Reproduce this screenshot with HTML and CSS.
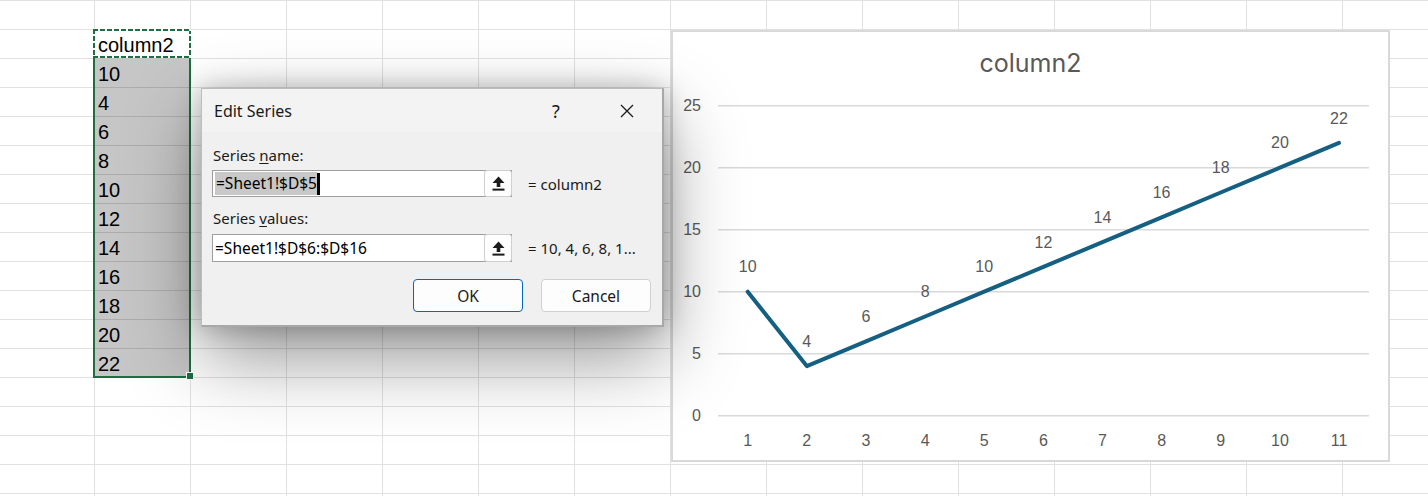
FILE: index.html
```html
<!DOCTYPE html>
<html>
<head>
<meta charset="utf-8">
<title>Edit Series</title>
<link rel="stylesheet" href="styles.css">
</head>
<body>
<div class="sheet">
  <div class="sel">
    <div class="sel-head">column2</div>
    <div class="sel-body">
      <div class="sel-row">10</div>
      <div class="sel-row">4</div>
      <div class="sel-row">6</div>
      <div class="sel-row">8</div>
      <div class="sel-row">10</div>
      <div class="sel-row">12</div>
      <div class="sel-row">14</div>
      <div class="sel-row">16</div>
      <div class="sel-row">18</div>
      <div class="sel-row">20</div>
      <div class="sel-row">22</div>
    </div>
    <span class="fill-handle"></span>
  </div>
</div>

<div class="chart">
  <div class="chart-title">column2</div>
  <svg class="chart-plot" width="715" height="378" viewBox="673 82 715 378">
    <g class="grid">
      <line x1="718" x2="1369" y1="105.7" y2="105.7"/>
      <line x1="718" x2="1369" y1="167.7" y2="167.7"/>
      <line x1="718" x2="1369" y1="229.7" y2="229.7"/>
      <line x1="718" x2="1369" y1="291.7" y2="291.7"/>
      <line x1="718" x2="1369" y1="353.7" y2="353.7"/>
      <line x1="718" x2="1369" y1="415.7" y2="415.7"/>
    </g>
    <g class="ylab">
      <text x="701" y="111.4">25</text>
      <text x="701" y="173.4">20</text>
      <text x="701" y="235.4">15</text>
      <text x="701" y="297.4">10</text>
      <text x="701" y="359.4">5</text>
      <text x="701" y="421.4">0</text>
    </g>
    <g class="xlab">
      <text x="747.7" y="445.7">1</text>
      <text x="806.8" y="445.7">2</text>
      <text x="866.0" y="445.7">3</text>
      <text x="925.1" y="445.7">4</text>
      <text x="984.2" y="445.7">5</text>
      <text x="1043.4" y="445.7">6</text>
      <text x="1102.5" y="445.7">7</text>
      <text x="1161.6" y="445.7">8</text>
      <text x="1220.7" y="445.7">9</text>
      <text x="1279.9" y="445.7">10</text>
      <text x="1339.0" y="445.7">11</text>
    </g>
    <polyline class="series" points="747.7,291.7 806.8,366.1 866.0,341.3 925.1,316.5 984.2,291.7 1043.4,266.9 1102.5,242.1 1161.6,217.3 1220.7,192.5 1279.9,167.7 1339.0,142.9"/>
    <g class="dlab">
      <text x="747.7" y="272.4">10</text>
      <text x="806.8" y="346.8">4</text>
      <text x="866.0" y="322.0">6</text>
      <text x="925.1" y="297.2">8</text>
      <text x="984.2" y="272.4">10</text>
      <text x="1043.4" y="247.6">12</text>
      <text x="1102.5" y="222.8">14</text>
      <text x="1161.6" y="198.0">16</text>
      <text x="1220.7" y="173.2">18</text>
      <text x="1279.9" y="148.4">20</text>
      <text x="1339.0" y="123.6">22</text>
    </g>
  </svg>
</div>

<div class="dialog">
  <div class="dlg-title">
    <span class="dlg-caption">Edit Series</span>
    <span class="dlg-help">?</span>
    <span class="dlg-close">
      <svg width="14" height="14" viewBox="0 0 14 14"><path d="M1 1 L13 13 M13 1 L1 13" stroke="#1a1a1a" stroke-width="1.3" fill="none"/></svg>
    </span>
  </div>
  <div class="dlg-body">
    <div class="field-label">Series <u>n</u>ame:</div>
    <div class="field-row">
      <div class="ref-input">
        <span class="ref-text"><span class="hl">=Sheet1!$D$5</span><span class="caret"></span></span>
        <span class="ref-btn">
          <svg width="13" height="15" viewBox="0 0 13 15"><path d="M6.5 0.5 L12.5 7 H8.3 V11 H4.7 V7 H0.5 Z" fill="#1a1a1a"/><rect x="0.5" y="12.6" width="12" height="2" fill="#1a1a1a"/></svg>
        </span>
      </div>
      <span class="ref-value">= column2</span>
    </div>
    <div class="field-label second">Series <u>v</u>alues:</div>
    <div class="field-row second">
      <div class="ref-input tall">
        <span class="ref-text">=Sheet1!$D$6:$D$16</span>
        <span class="ref-btn">
          <svg width="13" height="15" viewBox="0 0 13 15"><path d="M6.5 0.5 L12.5 7 H8.3 V11 H4.7 V7 H0.5 Z" fill="#1a1a1a"/><rect x="0.5" y="12.6" width="12" height="2" fill="#1a1a1a"/></svg>
        </span>
      </div>
      <span class="ref-value">= 10, 4, 6, 8, 1...</span>
    </div>
    <div class="dlg-buttons">
      <button class="btn btn-primary">OK</button>
      <button class="btn">Cancel</button>
    </div>
  </div>
</div>
</body>
</html>
```

FILE: styles.css
```css
* { box-sizing: border-box; }

html, body {
  margin: 0;
  padding: 0;
}

body {
  width: 1428px;
  height: 496px;
  overflow: hidden;
  position: relative;
  background: #fff;
  font-family: "Liberation Sans", Arial, sans-serif;
  color: #000;
}

/* ---------- spreadsheet grid ---------- */
.sheet {
  width: 1428px;
  height: 496px;
  display: grid;
  grid-template-columns: 94px repeat(14, 96px);
  grid-template-rows: repeat(18, 29px);
  background-color: #fff;
  background-image:
    repeating-linear-gradient(to right, transparent 0 94px, #e1e1e1 94px 95px, transparent 95px 96px),
    repeating-linear-gradient(to bottom, #e1e1e1 0 1px, transparent 1px 29px);
}

.sel {
  grid-column: 2;
  grid-row: 2 / span 12;
  margin: 0 -1px -1px -1px;
  position: relative;
  display: flex;
  flex-direction: column;
  font-size: 20px;
}

.sel-head {
  height: 29px;
  padding: 4px 0 0 5px;
  line-height: 25px;
  background:
    repeating-linear-gradient(to right, #1d6e41 0 5px, #fff 5px 7px) top left / 100% 2px no-repeat,
    repeating-linear-gradient(to right, #1d6e41 0 5px, #fff 5px 7px) bottom left / 100% 2px no-repeat,
    repeating-linear-gradient(to bottom, #1d6e41 0 5px, #fff 5px 7px) top left / 2px 100% no-repeat,
    repeating-linear-gradient(to bottom, #1d6e41 0 5px, #fff 5px 7px) top right / 2px 100% no-repeat,
    #fff;
}

.sel-body {
  background: #c6c6c6;
  border: 2px solid #1d6e41;
  border-top: 0;
}

.sel-row {
  height: 29px;
  padding: 4px 0 0 3px;
  line-height: 25px;
}

.sel-row + .sel-row {
  border-top: 1px solid #adadad;
  padding-top: 3px;
}

.sel-row:last-child {
  height: 28px;
}

.fill-handle {
  position: absolute;
  right: -3px;
  bottom: -2px;
  width: 8px;
  height: 8px;
  background: #1d6e41;
  border: 1px solid #fff;
}

/* ---------- chart ---------- */
.chart {
  position: absolute;
  left: 671px;
  top: 30px;
  width: 719px;
  height: 432px;
  border: 2px solid #d9d9d9;
  background: #fff;
  display: flex;
  flex-direction: column;
  z-index: 1;
}

.chart-title {
  height: 50px;
  padding-top: 12px;
  line-height: 38px;
  text-align: center;
  font-family: Inter, "Liberation Sans", sans-serif;
  font-size: 25px;
  color: #595959;
}

.chart-plot {
  display: block;
}

.grid line {
  stroke: #d9d9d9;
  stroke-width: 1.5;
}

.chart-plot text {
  font-family: "Liberation Sans", Arial, sans-serif;
  font-size: 16px;
  fill: #595959;
}

.ylab text { text-anchor: end; }
.xlab text, .dlab text { text-anchor: middle; }

.series {
  fill: none;
  stroke: #156082;
  stroke-width: 4;
  stroke-linecap: round;
  stroke-linejoin: round;
}

/* ---------- dialog ---------- */
.dialog {
  position: absolute;
  left: 201px;
  top: 88px;
  width: 463px;
  height: 239px;
  background: #f0f0f0;
  border: 1px solid #bdbdbd;
  border-right: 2px solid #a8a8a8;
  border-bottom: 2px solid #a8a8a8;
  box-shadow: 0 0 24px rgba(0, 0, 0, 0.24), 0 30px 72px rgba(0, 0, 0, 0.42);
  z-index: 2;
  font-family: "Noto Sans", "Open Sans", sans-serif;
  color: #1a1a1a;
  display: flex;
  flex-direction: column;
}

.dlg-title {
  height: 43px;
  display: flex;
  align-items: center;
  padding: 0 12px 0 12px;
  background: #f3f3f3;
}

.dlg-caption {
  flex: 1;
  font-size: 16px;
}

.dlg-help {
  width: 28px;
  margin-right: 34px;
  text-align: center;
  font-size: 18px;
}

.dlg-close {
  width: 46px;
  display: flex;
  justify-content: center;
  align-items: center;
}

.dlg-body {
  padding: 13px 11px 0 10px;
  display: flex;
  flex-direction: column;
  font-size: 15px;
}

.field-label {
  line-height: 20px;
  padding-left: 1px;
}

.field-label u {
  text-underline-offset: 2px;
}

.field-label.second {
  margin-top: 11px;
}

.field-row {
  display: flex;
  align-items: center;
  margin-top: 5px;
}

.field-row.second {
  margin-top: 6px;
}

.ref-input {
  width: 300px;
  height: 27px;
  border: 1px solid #9e9e9e;
  background: #fff;
  display: flex;
  align-items: center;
}

.ref-input.tall {
  height: 28px;
}

.ref-text {
  flex: 1;
  padding-left: 2px;
  display: flex;
  align-items: center;
  white-space: nowrap;
  color: #000;
  font-size: 15.5px;
}

.hl {
  background: #c8c8c8;
  line-height: 23px;
  padding-left: 1px;
}

.caret {
  width: 3px;
  height: 22px;
  background: #000;
}

.ref-btn {
  width: 28px;
  align-self: stretch;
  margin: -1px -1px -1px 0;
  border: 1px solid #cfcfcf;
  border-radius: 3px;
  background: #fdfdfd;
  display: flex;
  align-items: center;
  justify-content: center;
}

.ref-value {
  margin-left: 16px;
  white-space: nowrap;
}

.dlg-buttons {
  display: flex;
  justify-content: flex-end;
  gap: 18px;
  margin-top: 17px;
}

.btn {
  width: 110px;
  height: 33px;
  font-family: inherit;
  font-size: 15.5px;
  color: #1a1a1a;
  background: #fdfdfd;
  border: 1px solid #d0d0d0;
  border-radius: 4px;
  padding: 0;
}

.btn-primary {
  border-color: #0067c0;
}
```
